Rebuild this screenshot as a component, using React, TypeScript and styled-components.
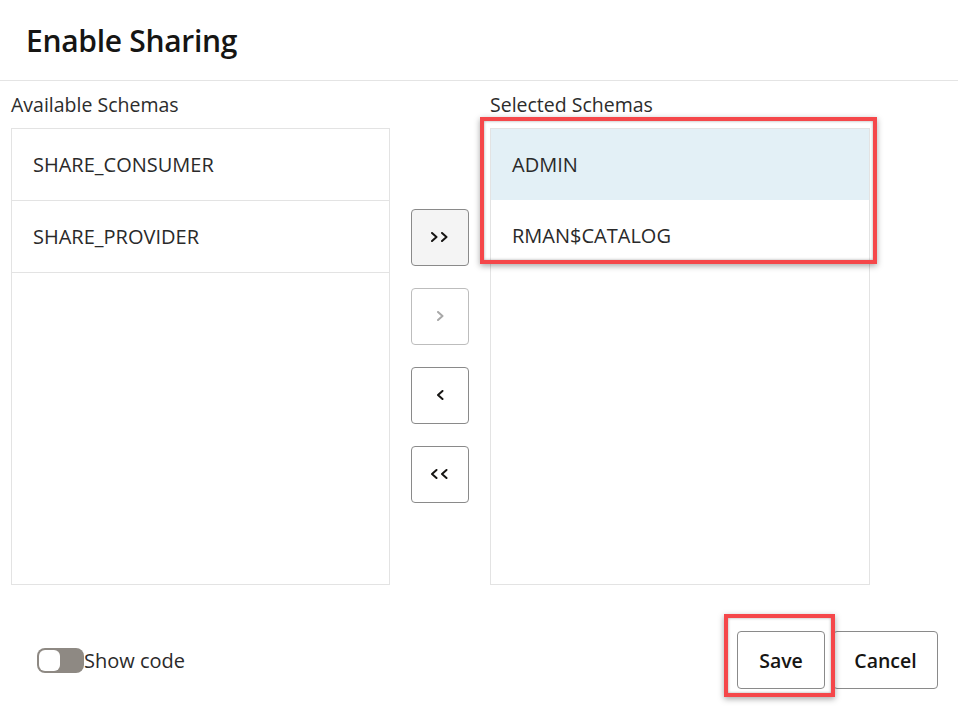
import React from "react";
import styled, { createGlobalStyle } from "styled-components";

const Global = createGlobalStyle`
  html, body { margin: 0; padding: 0; background: #ffffff; }
  body { font-family: "Open Sans", "Noto Sans", sans-serif; color: #161513; }
`;

const Page = styled.div`
  width: 958px;
  height: 706px;
  display: flex;
  flex-direction: column;
  overflow: hidden;
`;

const Header = styled.header`
  height: 81px;
  display: flex;
  align-items: center;
  padding-left: 26px;
  border-bottom: 1px solid #e4e4e4;
  box-sizing: border-box;
`;

const Title = styled.h1`
  margin: 0;
  font-size: 30px;
  font-weight: 600;
  color: #161513;
  letter-spacing: -0.3px;
`;

const Shuttle = styled.div`
  display: grid;
  grid-template-columns: 379px 58px 380px;
  grid-template-rows: auto 457px;
  column-gap: 21px;
  row-gap: 11px;
  padding: 12px 0 0 11px;
`;

const Label = styled.div`
  font-size: 19.5px;
  line-height: 24px;
  color: #2c2c2c;
`;

const List = styled.div<{ $col: number }>`
  grid-row: 2;
  grid-column: ${(p) => p.$col};
  border: 1px solid #e3e3e3;
  position: relative;
  display: flex;
  flex-direction: column;
`;

const Row = styled.div<{ $selected?: boolean; $divided?: boolean }>`
  height: 71px;
  display: flex;
  align-items: center;
  padding-left: 21px;
  font-size: 20px;
  color: #2a2a2a;
  background: ${(p) => (p.$selected ? "#e3f0f6" : "transparent")};
  border-bottom: ${(p) => (p.$divided ? "1px solid #e3e3e3" : "none")};
`;

const Controls = styled.div`
  grid-row: 2;
  grid-column: 2;
  align-self: center;
  display: flex;
  flex-direction: column;
  gap: 22px;
  margin-top: -2px;
`;

const MoveButton = styled.button<{ $active?: boolean }>`
  width: 58px;
  height: 57px;
  border-radius: 4px;
  border: 1px solid ${(p) => (p.disabled ? "#bdbdbd" : "#8a8a8a")};
  background: ${(p) => (p.$active ? "#f4f4f4" : "#ffffff")};
  color: ${(p) => (p.disabled ? "#a8a8a8" : "#161513")};
  display: flex;
  align-items: center;
  justify-content: center;
  padding: 0;
  cursor: pointer;
`;

const Highlight = styled.div`
  position: absolute;
  border: 4px solid #f5474a;
  box-sizing: border-box;
  box-shadow: 0 2px 6px rgba(0, 0, 0, 0.35), inset 0 0 3px rgba(0, 0, 0, 0.35);
  pointer-events: none;
`;

const ListHighlight = styled(Highlight)`
  top: -12px;
  left: -11px;
  width: 397px;
  height: 147px;
`;

const Footer = styled.footer`
  display: flex;
  align-items: center;
  justify-content: space-between;
  padding: 46px 20px 0 37px;
`;

const ToggleWrap = styled.label`
  display: flex;
  align-items: center;
  font-size: 20px;
  color: #2a2a2a;
`;

const Track = styled.span`
  width: 47px;
  height: 25px;
  border-radius: 8px;
  background: #8e8983;
  box-sizing: border-box;
  padding: 2px;
  display: flex;
  align-items: center;
`;

const Knob = styled.span`
  width: 21px;
  height: 21px;
  border-radius: 6px;
  background: #ffffff;
`;

const Actions = styled.div`
  display: flex;
  gap: 8px;
`;

const SaveWrap = styled.div`
  position: relative;
`;

const SaveHighlight = styled(Highlight)`
  top: -17px;
  left: -13px;
  width: 111px;
  height: 83px;
`;

const ActionButton = styled.button<{ $w: number }>`
  width: ${(p) => p.$w}px;
  height: 58px;
  border: 1px solid #8a8a8a;
  border-radius: 4px;
  background: #ffffff;
  font-family: "Open Sans", "Noto Sans", sans-serif;
  font-size: 19.5px;
  font-weight: 600;
  color: #161513;
  padding: 0;
`;

const Chevron = ({ dir, count }: { dir: "left" | "right"; count: number }) => {
  const pts = (x: number) =>
    dir === "right" ? `${x},1 ${x + 4.5},5 ${x},9` : `${x + 4.5},1 ${x},5 ${x + 4.5},9`;
  const w = count === 2 ? 18 : 7;
  return (
    <svg width={w} height={10} viewBox={`0 0 ${w} 10`} fill="none">
      <polyline points={pts(1)} stroke="currentColor" strokeWidth={2} strokeLinecap="round" strokeLinejoin="round" />
      {count === 2 && (
        <polyline points={pts(11)} stroke="currentColor" strokeWidth={2} strokeLinecap="round" strokeLinejoin="round" />
      )}
    </svg>
  );
};

export default function App() {
  return (
    <Page>
      <Global />
      <Header>
        <Title>Enable Sharing</Title>
      </Header>
      <Shuttle>
        <Label>Available Schemas</Label>
        <span />
        <Label>Selected Schemas</Label>
        <List $col={1}>
          <Row $divided>SHARE_CONSUMER</Row>
          <Row $divided>SHARE_PROVIDER</Row>
        </List>
        <Controls>
          <MoveButton $active aria-label="Move all right">
            <Chevron dir="right" count={2} />
          </MoveButton>
          <MoveButton disabled aria-label="Move right">
            <Chevron dir="right" count={1} />
          </MoveButton>
          <MoveButton aria-label="Move left">
            <Chevron dir="left" count={1} />
          </MoveButton>
          <MoveButton aria-label="Move all left">
            <Chevron dir="left" count={2} />
          </MoveButton>
        </Controls>
        <List $col={3}>
          <Row $selected>ADMIN</Row>
          <Row>RMAN$CATALOG</Row>
          <ListHighlight />
        </List>
      </Shuttle>
      <Footer>
        <ToggleWrap>
          <Track>
            <Knob />
          </Track>
          Show code
        </ToggleWrap>
        <Actions>
          <SaveWrap>
            <ActionButton $w={88}>Save</ActionButton>
            <SaveHighlight />
          </SaveWrap>
          <ActionButton $w={105}>Cancel</ActionButton>
        </Actions>
      </Footer>
    </Page>
  );
}
